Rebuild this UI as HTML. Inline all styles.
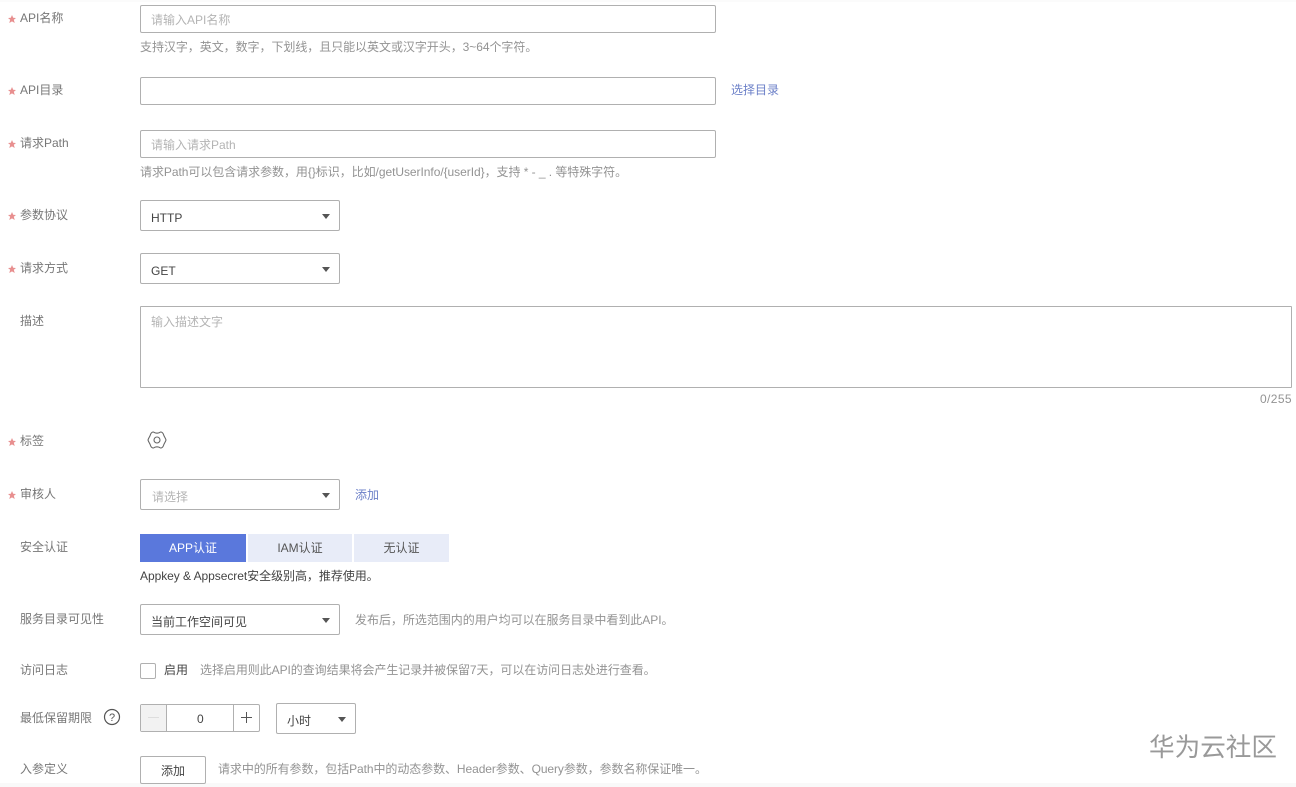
<!DOCTYPE html>
<html lang="zh"><head><meta charset="utf-8"><style>
html,body{margin:0;padding:0}
body{width:1296px;height:787px;position:relative;overflow:hidden;background:#fff;font-family:"Liberation Sans","Noto Sans CJK SC",sans-serif;font-size:12px;color:#777}
.t{position:absolute;white-space:nowrap;line-height:16px;height:16px}
.l{color:#777}
.s{position:absolute;left:8px;width:8px;height:8px;background:#e88f8f;clip-path:polygon(50% 0,65% 34%,100% 38%,73% 60%,84% 100%,50% 80%,16% 100%,27% 60%,0 38%,35% 34%)}
.p{color:#b4b4b4}
.h{color:#939393}
.d{color:#444}
.a{color:#6c80c8}
.b{position:absolute;box-sizing:border-box;border:1px solid #b0b0b0;border-radius:2px;background:#fff}
.c{position:absolute;width:0;height:0;border-left:4px solid transparent;border-right:4px solid transparent;border-top:5px solid #555}
.k{position:absolute;top:534px;height:28px;line-height:29px;text-align:center;background:#e8ecf8;color:#555}
</style></head><body>
<div style="position:absolute;left:0;top:0;width:1296px;height:2px;background:#fbfbfb"></div>
<div style="position:absolute;left:0;top:783px;width:1296px;height:4px;background:#f9f9f9"></div>

<div class="s" style="top:15px"></div><div class="t l" style="left:20px;top:10px">API名称</div>
<div class="b" style="left:140px;top:5px;width:576px;height:28px"></div>
<div class="t p" style="left:151px;top:12px">请输入API名称</div>
<div class="t h" style="left:140px;top:39px;letter-spacing:-.05px">支持汉字，英文，数字，下划线，且只能以英文或汉字开头，3~64个字符。</div>

<div class="s" style="top:87px"></div><div class="t l" style="left:20px;top:82px">API目录</div>
<div class="b" style="left:140px;top:77px;width:576px;height:28px"></div>
<div class="t a" style="left:731px;top:82px">选择目录</div>

<div class="s" style="top:140px"></div><div class="t l" style="left:20px;top:135px">请求Path</div>
<div class="b" style="left:140px;top:130px;width:576px;height:28px"></div>
<div class="t p" style="left:151px;top:137px">请输入请求Path</div>
<div class="t h" style="left:140px;top:164px;letter-spacing:-.05px">请求Path可以包含请求参数，用{}标识，比如/getUserInfo/{userId}，支持 * - _ . 等特殊字符。</div>

<div class="s" style="top:212px"></div><div class="t l" style="left:20px;top:207px">参数协议</div>
<div class="b" style="left:140px;top:200px;width:200px;height:31px"></div>
<div class="t d" style="left:151px;top:210px">HTTP</div><div class="c" style="left:322px;top:214px"></div>

<div class="s" style="top:265px"></div><div class="t l" style="left:20px;top:260px">请求方式</div>
<div class="b" style="left:140px;top:253px;width:200px;height:31px"></div>
<div class="t d" style="left:151px;top:263px">GET</div><div class="c" style="left:322px;top:267px"></div>

<div class="t l" style="left:20px;top:313px">描述</div>
<div class="b" style="left:140px;top:306px;width:1152px;height:82px;border-radius:1px"></div>
<div class="t p" style="left:151px;top:314px">输入描述文字</div>
<div class="t h" style="right:4px;top:391px;letter-spacing:.4px">0/255</div>

<div class="s" style="top:438px"></div><div class="t l" style="left:20px;top:433px">标签</div>
<svg style="position:absolute;left:147px;top:430px" width="20" height="20" viewBox="0 0 20 20" fill="none" stroke="#666" stroke-width="1.1" stroke-linejoin="round"><path d="M1 10 C1.500 8 3 6.500 3.500 4.500 C4 3 5 2 6.500 2 C7.500 2.800 8.700 3.200 10 3.200 C11.300 3.200 12.500 2.800 13.500 2 C15 2 16 3 16.500 4.500 C17 6.500 18.500 8 19 10 C18.500 12 17 13.500 16.500 15.500 C16 17 15 18 13.500 18 C12.500 17.200 11.300 16.800 10 16.800 C8.700 16.800 7.500 17.200 6.500 18 C5 18 4 17 3.500 15.500 C3 13.500 1.500 12 1 10 Z"/><circle cx="10" cy="10" r="3"/></svg>

<div class="s" style="top:491px"></div><div class="t l" style="left:20px;top:486px">审核人</div>
<div class="b" style="left:140px;top:479px;width:200px;height:31px"></div>
<div class="t p" style="left:152px;top:489px">请选择</div><div class="c" style="left:322px;top:493px"></div>
<div class="t a" style="left:355px;top:487px">添加</div>

<div class="t l" style="left:20px;top:539px">安全认证</div>
<div class="k" style="left:140px;width:106px;background:#5a78dc;color:#fff">APP认证</div>
<div class="k" style="left:248px;width:104px">IAM认证</div>
<div class="k" style="left:354px;width:95px">无认证</div>
<div class="t d" style="left:140px;top:568px;letter-spacing:-.05px">Appkey &amp; Appsecret安全级别高，推荐使用。</div>

<div class="t l" style="left:20px;top:611px">服务目录可见性</div>
<div class="b" style="left:140px;top:604px;width:200px;height:31px"></div>
<div class="t d" style="left:151px;top:614px">当前工作空间可见</div><div class="c" style="left:322px;top:618px"></div>
<div class="t h" style="left:355px;top:612px;letter-spacing:-.03px">发布后，所选范围内的用户均可以在服务目录中看到此API。</div>

<div class="t l" style="left:20px;top:662px">访问日志</div>
<div class="b" style="left:140px;top:663px;width:16px;height:16px"></div>
<div class="t d" style="left:164px;top:662px">启用</div>
<div class="t h" style="left:200px;top:662px;letter-spacing:-.06px">选择启用则此API的查询结果将会产生记录并被保留7天，可以在访问日志处进行查看。</div>

<div class="t l" style="left:20px;top:710px">最低保留期限</div>
<svg style="position:absolute;left:103px;top:708px" width="18" height="18" viewBox="0 0 18 18"><circle cx="9" cy="9" r="7.500" fill="none" stroke="#555" stroke-width="1.200"/><text x="9" y="13" text-anchor="middle" font-size="11" fill="#555" font-family="Liberation Sans">?</text></svg>
<div class="b" style="left:140px;top:704px;width:120px;height:28px"></div>
<div style="position:absolute;left:141px;top:705px;width:25px;height:26px;background:#f2f2f2;border-right:1px solid #b0b0b0"></div>
<div style="position:absolute;left:233px;top:705px;width:1px;height:26px;background:#b0b0b0"></div>
<div style="position:absolute;left:148px;top:717px;width:11px;height:1px;background:#ddd"></div>
<div style="position:absolute;left:241px;top:717px;width:11px;height:1px;background:#555"></div>
<div style="position:absolute;left:246px;top:712px;width:1px;height:11px;background:#555"></div>
<div class="t d" style="left:197px;top:711px">0</div>
<div class="b" style="left:276px;top:703px;width:80px;height:31px"></div>
<div class="t d" style="left:287px;top:713px">小时</div><div class="c" style="left:338px;top:717px"></div>

<div class="t l" style="left:20px;top:761px">入参定义</div>
<div class="b" style="left:140px;top:756px;width:66px;height:28px"></div>
<div class="t d" style="left:161px;top:763px">添加</div>
<div class="t h" style="left:218px;top:761px;letter-spacing:-.08px">请求中的所有参数，包括Path中的动态参数、Header参数、Query参数，参数名称保证唯一。</div>

<div class="t" style="left:1149px;top:734px;height:28px;line-height:28px;font-size:25.6px;color:#999">华为云社区</div>
</body></html>
